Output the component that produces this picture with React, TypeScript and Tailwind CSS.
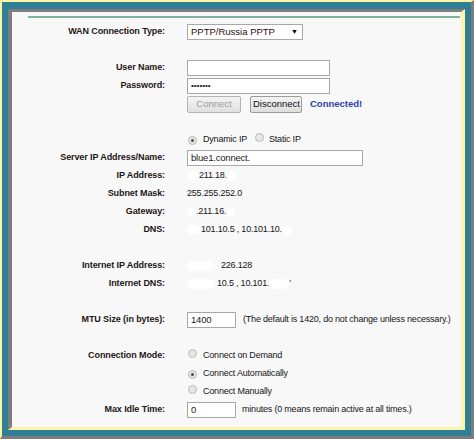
import React from 'react';

const font = { fontFamily: '"Liberation Sans", Arial, sans-serif' };

const Label = ({ children }: { children?: React.ReactNode }) => (
  <div className="h-[18px] flex items-center justify-end text-[9px] font-bold text-[#1d1616] tracking-[-0.1px] whitespace-nowrap">
    {children}
  </div>
);

const Cell = ({ children }: { children?: React.ReactNode }) => (
  <div className="h-[18px] flex items-center text-[9px] text-[#161616] tracking-[-0.2px] whitespace-nowrap">
    {children}
  </div>
);

const Blob = ({ w }: { w: number }) => (
  <span className="inline-block h-[10px] rounded-full bg-white blur-[1px]" style={{ width: w }} />
);

const Radio = ({ checked }: { checked?: boolean }) => (
  <span className="inline-flex items-center justify-center w-[9px] h-[9px] rounded-full border border-[#b9b9b9] bg-[#e6e6e6]">
    {checked && <span className="w-[3px] h-[3px] rounded-full bg-[#4a4a4a]" />}
  </span>
);

const Input = ({ w, value }: { w: number; value?: React.ReactNode }) => (
  <div
    className="h-[16px] border border-[#a8a8a8] bg-white flex items-center pl-[3px] text-[9.5px] text-[#1a1a1a]"
    style={{ width: w }}
  >
    {value}
  </div>
);

export default function App() {
  return (
    <div className="w-[474px] h-[439px] bg-[#2f7e96] border-t-2 border-l-2 border-[#fbf5a6] border-r-[3px] border-b-[3px] border-r-[#7d7d7d] border-b-[#7d7d7d] pt-[7px] pl-[6px] pr-[6px] pb-[6px]" style={font}>
      <div className="w-full h-full bg-[#f8f8f8] border-t-[3px] border-l-4 border-[#7d7d7d] border-r-4 border-b-[3px] border-r-[#fbf5a6] border-b-[#fbf5a6] pt-[4px]">
        <div className="ml-[16px] mr-[1px] h-[2px] bg-[#7db39b]" />
        <div className="mt-[5px] grid grid-cols-[153px_1fr] gap-x-[22px]">
          <Label>WAN Connection Type:</Label>
          <Cell>
            <div className="w-[116px] h-[16px] border border-[#a8a8a8] bg-white flex items-center justify-between pl-[3px] pr-[4px] text-[9.5px] text-[#2a1010] tracking-normal">
              <span>PPTP/Russia PPTP</span>
              <span className="text-[7px] text-black">▼</span>
            </div>
          </Cell>

          <Label />
          <Cell />

          <Label>User Name:</Label>
          <Cell><Input w={143} /></Cell>

          <Label>Password:</Label>
          <Cell><Input w={143} value={<span className="text-[8px] tracking-[0px]">•••••••</span>} /></Cell>

          <Label />
          <Cell>
            <button className="w-[54px] h-[17px] border border-[#b3b3b3] rounded-[2px] bg-gradient-to-b from-[#f4f4f4] to-[#e0e0e0] text-[9.5px] text-[#9a9a9a] tracking-normal">
              Connect
            </button>
            <button className="ml-[9px] w-[52px] h-[17px] border border-[#9c9c9c] rounded-[2px] bg-gradient-to-b from-[#f4f4f4] to-[#dedede] text-[9.5px] text-[#111] tracking-normal overflow-hidden whitespace-nowrap pl-[2px] text-left">
              Disconnect
            </button>
            <span className="ml-[8px] text-[9.5px] font-bold text-[#2b43ad] tracking-normal">Connected!</span>
          </Cell>

          <Label />
          <Cell />

          <Label />
          <Cell>
            <span className="ml-[1px]"><Radio checked /></span>
            <span className="ml-[6px]">Dynamic IP</span>
            <span className="ml-[8px]"><Radio /></span>
            <span className="ml-[5px]">Static IP</span>
          </Cell>

          <Label>Server IP Address/Name:</Label>
          <Cell><Input w={176} value="blue1.connect." /></Cell>

          <Label>IP Address:</Label>
          <Cell><Blob w={11} /><span className="ml-[1px]">211.18.</span><Blob w={9} /></Cell>

          <Label>Subnet Mask:</Label>
          <Cell>255.255.252.0</Cell>

          <Label>Gateway:</Label>
          <Cell><Blob w={9} /><span>.211.16.</span><Blob w={9} /></Cell>

          <Label>DNS:</Label>
          <Cell><Blob w={13} /><span className="ml-[1px]">101.10.5 , 10.101.10.</span><Blob w={10} /></Cell>

          <Label />
          <Cell />

          <Label>Internet IP Address:</Label>
          <Cell><Blob w={28} /><span className="ml-[6px]">226.128</span></Cell>

          <Label>Internet DNS:</Label>
          <Cell><Blob w={28} /><span className="ml-[2px]">10.5 , 10.101.</span><Blob w={20} /><span>'</span></Cell>

          <Label />
          <Cell />

          <Label>MTU Size (in bytes):</Label>
          <Cell>
            <Input w={49} value="1400" />
            <span className="ml-[7px]">(The default is 1420, do not change unless necessary.)</span>
          </Cell>

          <Label />
          <Cell />

          <Label>Connection Mode:</Label>
          <Cell>
            <span className="ml-[1px]"><Radio /></span>
            <span className="ml-[6px]">Connect on Demand</span>
          </Cell>

          <Label />
          <Cell>
            <span className="ml-[1px]"><Radio checked /></span>
            <span className="ml-[6px]">Connect Automatically</span>
          </Cell>

          <Label />
          <Cell>
            <span className="ml-[1px]"><Radio /></span>
            <span className="ml-[6px]">Connect Manually</span>
          </Cell>

          <Label>Max Idle Time:</Label>
          <Cell>
            <Input w={49} value="0" />
            <span className="ml-[6px]">minutes (0 means remain active at all times.)</span>
          </Cell>
        </div>
      </div>
    </div>
  );
}
